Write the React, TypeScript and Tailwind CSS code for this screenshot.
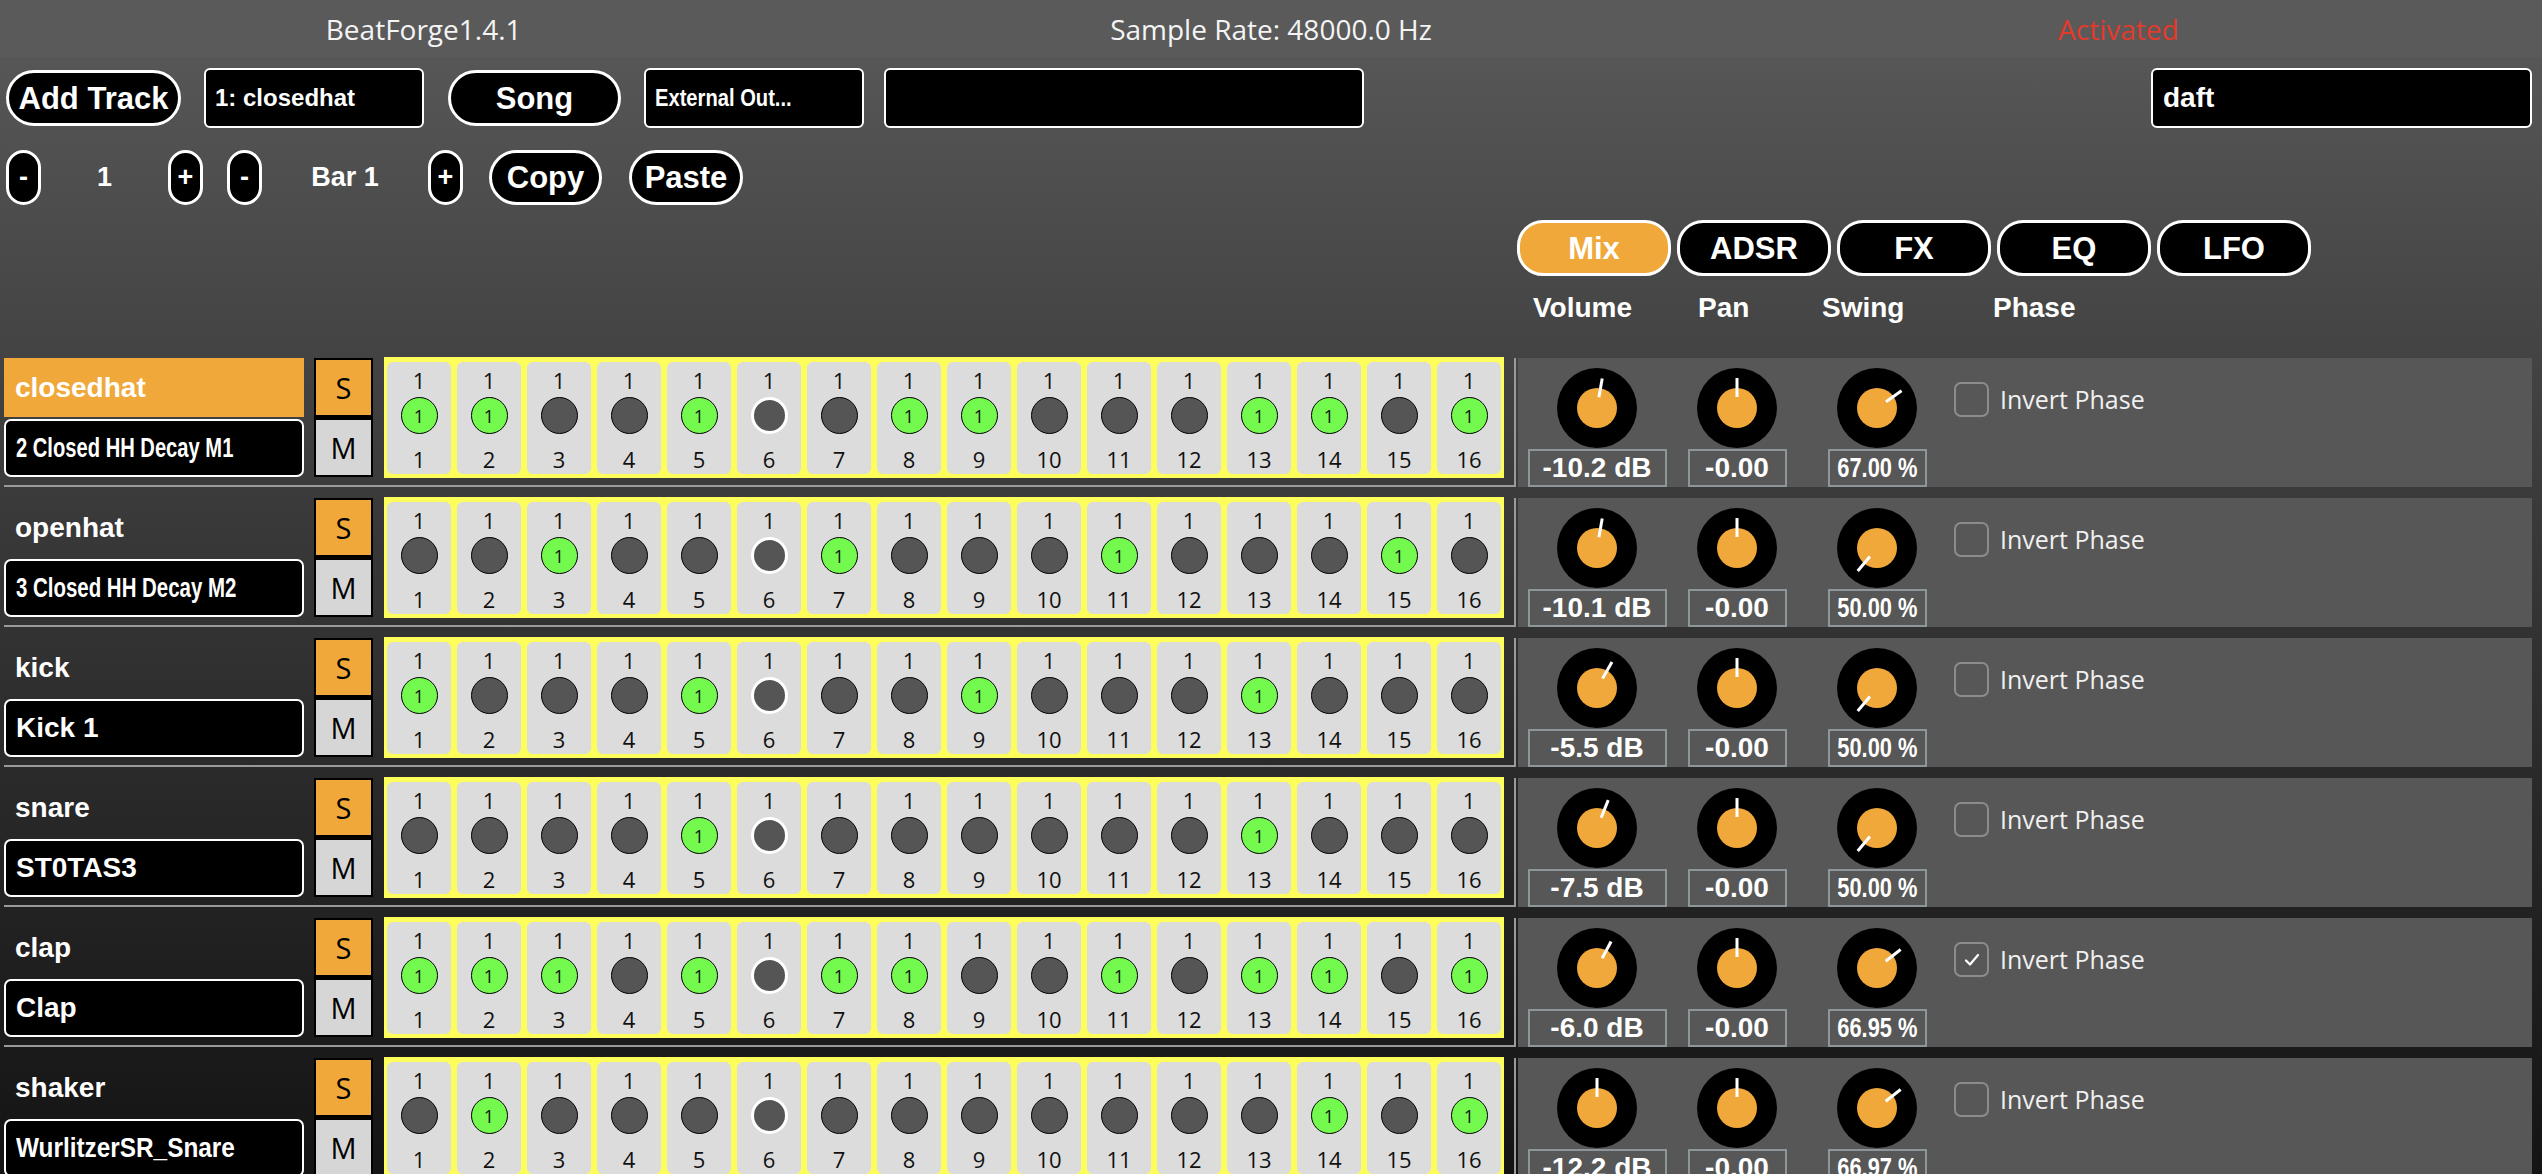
import React from 'react';

type Track = {
  name: string;
  sample: string;
  sampleFit: string;
  steps: number[];
  volume: string;
  volAngle: number;
  swing: string;
  swingAngle: number;
  invert: boolean;
};

const tracks: Track[] = [
  { name: 'closedhat', sample: '2 Closed HH Decay M1', sampleFit: 'scale-x-[0.72]', steps: [1, 2, 5, 8, 9, 13, 14, 16], volume: '-10.2 dB', volAngle: 10, swing: '67.00 %', swingAngle: 55, invert: false },
  { name: 'openhat', sample: '3 Closed HH Decay M2', sampleFit: 'scale-x-[0.73]', steps: [3, 7, 11, 15], volume: '-10.1 dB', volAngle: 10, swing: '50.00 %', swingAngle: -140, invert: false },
  { name: 'kick', sample: 'Kick 1', sampleFit: 'scale-x-100', steps: [1, 5, 9, 13], volume: '-5.5 dB', volAngle: 30, swing: '50.00 %', swingAngle: -140, invert: false },
  { name: 'snare', sample: 'ST0TAS3', sampleFit: 'scale-x-100', steps: [5, 13], volume: '-7.5 dB', volAngle: 22, swing: '50.00 %', swingAngle: -140, invert: false },
  { name: 'clap', sample: 'Clap', sampleFit: 'scale-x-100', steps: [1, 2, 3, 5, 7, 8, 11, 13, 14, 16], volume: '-6.0 dB', volAngle: 28, swing: '66.95 %', swingAngle: 52, invert: true },
  { name: 'shaker', sample: 'WurlitzerSR_Snare', sampleFit: 'scale-x-[0.87]', steps: [2, 14, 16], volume: '-12.2 dB', volAngle: 0, swing: '66.97 %', swingAngle: 52, invert: false },
];

const PLAYHEAD = 6;
const steps = Array.from({ length: 16 }, (_, i) => i + 1);

const Knob = ({ angle }: { angle: number }) => (
  <div className="relative w-[80px] h-[80px] rounded-full bg-black flex items-center justify-center">
    <div className="w-[40px] h-[40px] rounded-full bg-[#f0a83a]"></div>
    <div className="absolute inset-0" style={{ transform: `rotate(${angle}deg)` }}>
      <div className="absolute left-1/2 top-[10px] w-[3px] h-[19px] -translate-x-1/2 bg-white"></div>
    </div>
  </div>
);

const Pill = ({ label }: { label: string }) => (
  <div className="w-[35px] h-[55px] rounded-full border-[3px] border-white bg-black flex items-center justify-center text-[27px] font-bold leading-none">
    {label}
  </div>
);

const StepCell = ({ n, on }: { n: number; on: boolean }) => {
  const playing = n === PLAYHEAD;
  return (
    <div className="w-[64px] h-full rounded-[6px] bg-[#dcdcdc] flex flex-col items-center text-[#111] font-['Open_Sans',sans-serif]">
      <div className="h-[35px] flex items-center text-[22px] leading-none">1</div>
      {on ? (
        <div className="w-[37px] h-[37px] rounded-full border-[1.5px] border-black bg-[#74f94f] flex items-center justify-center text-[18px] leading-none">1</div>
      ) : playing ? (
        <div className="w-[37px] h-[37px] rounded-full border-[3px] border-white bg-[#555555]"></div>
      ) : (
        <div className="w-[37px] h-[37px] rounded-full border-[1.5px] border-black bg-[#555555]"></div>
      )}
      <div className="mt-[10px] h-[30px] flex items-center text-[22px] leading-none">{n}</div>
    </div>
  );
};

const TrackRow = ({ track, selected }: { track: Track; selected: boolean }) => (
  <div className="flex h-[129px] shrink-0">
    {/* name, solo/mute and the step sequence */}
    <div className="ml-[4px] w-[1512px] h-full border-r-2 border-b-2 border-[#9a9a9a] flex items-start">
      <div className="w-[300px] flex flex-col">
        <div className={`h-[59px] flex items-center pl-[11px] text-[28px] font-bold ${selected ? 'bg-[#f0a83a]' : ''}`}>
          {track.name}
        </div>
        <div className="mt-[2px] h-[58px] rounded-[7px] border-2 border-white bg-black flex items-center pl-[10px] overflow-hidden">
          <span className={`inline-block origin-left whitespace-nowrap text-[28px] font-bold ${track.sampleFit}`}>{track.sample}</span>
        </div>
      </div>
      <div className="ml-[10px] w-[59px] h-[119px] bg-black p-[2px] flex flex-col gap-[5px] font-['Open_Sans',sans-serif] text-black">
        <div className="h-[55px] bg-[#f0a83a] flex items-center justify-center text-[29px] leading-none">S</div>
        <div className="h-[55px] bg-[#d6d6d6] flex items-center justify-center text-[29px] leading-none">M</div>
      </div>
      <div className="ml-[11px] -mt-px w-[1120px] h-[121px] bg-[#fdfd5c] px-[3px] pt-[5px] pb-[4px] flex gap-[6px]">
        {steps.map((n) => (
          <StepCell key={n} n={n} on={track.steps.includes(n)} />
        ))}
      </div>
    </div>

    {/* mix panel */}
    <div className="ml-[2px] w-[1014px] h-full bg-[#575757] flex items-start pl-[9px]">
      <div className="w-[140px] flex flex-col items-center pt-[10px]">
        <Knob angle={track.volAngle} />
        <div className="mt-[1px] w-[139px] h-[38px] border-2 border-[#8d979a] flex items-center justify-center text-[28px] font-bold leading-none">
          {track.volume}
        </div>
      </div>
      <div className="w-[140px] flex flex-col items-center pt-[10px]">
        <Knob angle={0} />
        <div className="mt-[1px] w-[99px] h-[38px] border-2 border-[#8d979a] flex items-center justify-center text-[28px] font-bold leading-none">
          -0.00
        </div>
      </div>
      <div className="w-[140px] flex flex-col items-center pt-[10px]">
        <Knob angle={track.swingAngle} />
        <div className="mt-[1px] w-[99px] h-[38px] border-2 border-[#8d979a] flex items-center justify-center text-[28px] font-bold leading-none overflow-hidden">
          <span className="inline-block whitespace-nowrap scale-x-[0.78]">{track.swing}</span>
        </div>
      </div>
      <div className="ml-[7px] mt-[23px] flex items-center">
        <div className="w-[35px] h-[35px] rounded-[7px] border-2 border-[#8c8c8c] flex items-center justify-center">
          {track.invert && (
            <svg width="18" height="18" viewBox="0 0 18 18" fill="none">
              <path d="M3 9.5 L7 13.5 L15 4" stroke="white" strokeWidth="2.2" strokeLinecap="round" strokeLinejoin="round" />
            </svg>
          )}
        </div>
        <span className="ml-[11px] text-[25px] text-[#f0f0f0] font-['Open_Sans',sans-serif]">Invert Phase</span>
      </div>
    </div>
  </div>
);

const App = () => {
  return (
    <div className="w-[2542px] h-[1174px] overflow-hidden flex flex-col bg-linear-to-b from-[#5a5a5a] to-[#141414] text-white font-['Liberation_Sans',Arial,sans-serif]">
      {/* status header */}
      <div className="h-[57px] shrink-0 grid grid-cols-3 items-center bg-[#5a5a5a] text-[28px] text-[#f4f4f4] font-['Open_Sans',sans-serif]">
        <div className="text-center">BeatForge1.4.1</div>
        <div className="text-center">Sample Rate: 48000.0 Hz</div>
        <div className="text-center text-[#e23a2c]">Activated</div>
      </div>

      {/* track / song / output row */}
      <div className="mt-[11px] h-[60px] shrink-0 flex items-center pl-[6px] pr-[10px]">
        <div className="w-[175px] h-[56px] rounded-full border-[3px] border-white bg-black flex items-center justify-center text-[31px] font-bold leading-none whitespace-nowrap">
          Add Track
        </div>
        <div className="ml-[23px] w-[220px] h-[60px] rounded-[6px] border-2 border-white bg-black flex items-center pl-[9px] text-[24px] font-bold">
          1: closedhat
        </div>
        <div className="ml-[24px] w-[173px] h-[56px] rounded-full border-[3px] border-white bg-black flex items-center justify-center text-[31px] font-bold leading-none">
          Song
        </div>
        <div className="ml-[23px] w-[220px] h-[60px] rounded-[6px] border-2 border-white bg-black flex items-center pl-[9px] overflow-hidden">
          <span className="inline-block origin-left whitespace-nowrap scale-x-[0.84] text-[24px] font-bold">External Out...</span>
        </div>
        <div className="ml-[20px] w-[480px] h-[60px] rounded-[6px] border-2 border-white bg-black"></div>
        <div className="ml-auto w-[381px] h-[60px] rounded-[6px] border-2 border-white bg-black flex items-center pl-[10px] text-[28px] font-bold">
          daft
        </div>
      </div>

      {/* pattern / bar row */}
      <div className="mt-[22px] h-[55px] shrink-0 flex items-center pl-[6px]">
        <Pill label="-" />
        <div className="w-[127px] text-center text-[27px] font-bold">1</div>
        <Pill label="+" />
        <div className="ml-[24px]">
          <Pill label="-" />
        </div>
        <div className="w-[166px] text-center text-[27px] font-bold">Bar 1</div>
        <Pill label="+" />
        <div className="ml-[26px] w-[113px] h-[55px] rounded-full border-[3px] border-white bg-black flex items-center justify-center text-[31px] font-bold leading-none">
          Copy
        </div>
        <div className="ml-[27px] w-[114px] h-[55px] rounded-full border-[3px] border-white bg-black flex items-center justify-center text-[31px] font-bold leading-none">
          Paste
        </div>
      </div>

      {/* panel tabs */}
      <div className="mt-[15px] ml-[1517px] h-[56px] shrink-0 flex gap-[6px]">
        {['Mix', 'ADSR', 'FX', 'EQ', 'LFO'].map((tab) => (
          <div
            key={tab}
            className={`w-[154px] h-[56px] rounded-[26px] border-[3px] border-white flex items-center justify-center text-[31px] font-bold leading-none ${tab === 'Mix' ? 'bg-[#f0a83a]' : 'bg-black'}`}
          >
            {tab}
          </div>
        ))}
      </div>

      {/* column labels */}
      <div className="mt-[16px] ml-[1533px] h-[32px] shrink-0 flex items-center text-[28px] font-bold">
        <div className="w-[165px]">Volume</div>
        <div className="w-[124px]">Pan</div>
        <div className="w-[171px]">Swing</div>
        <div>Phase</div>
      </div>

      {/* tracks */}
      <div className="mt-[34px] flex flex-col gap-[11px]">
        {tracks.map((track, i) => (
          <TrackRow key={track.name} track={track} selected={i === 0} />
        ))}
      </div>
    </div>
  );
};

export default App;
